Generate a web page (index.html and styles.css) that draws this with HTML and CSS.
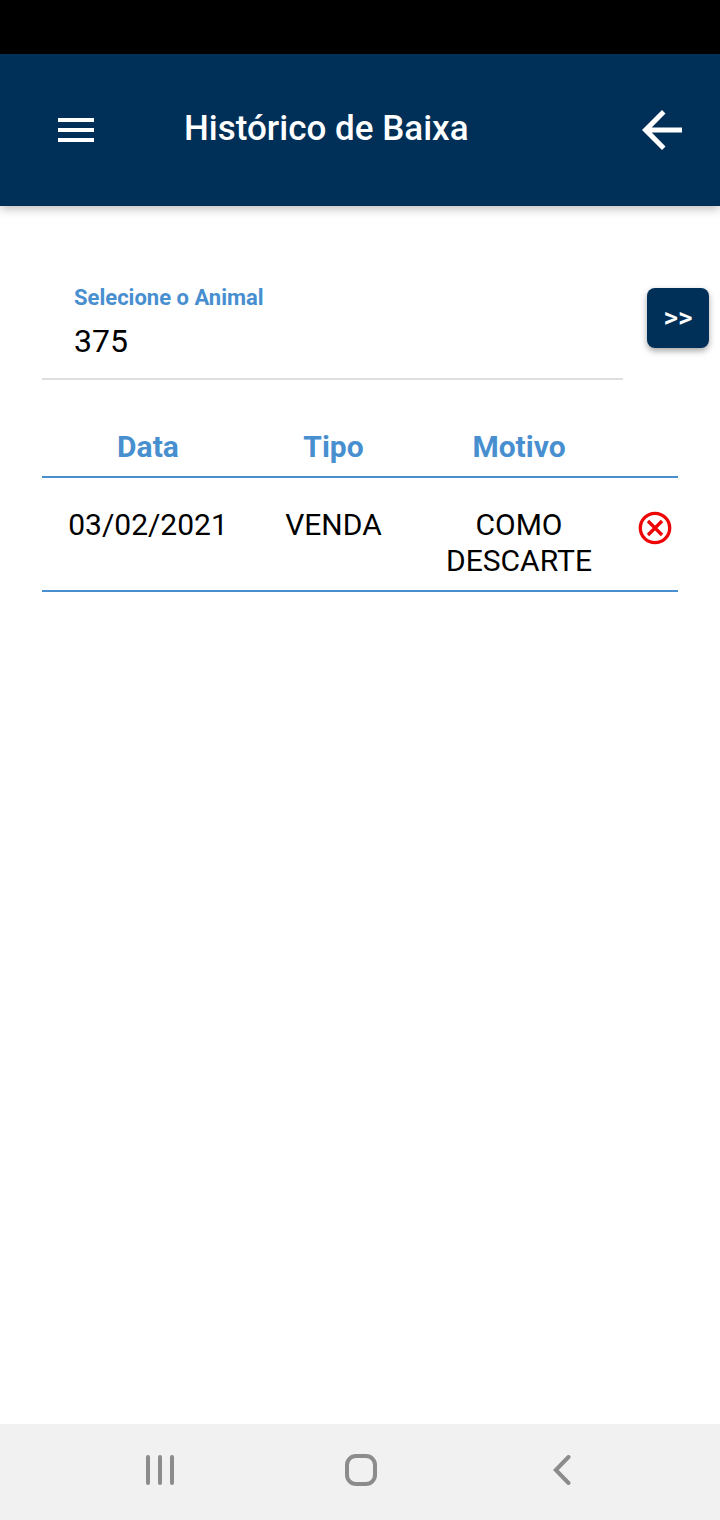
FILE: index.html
```html
<!DOCTYPE html>
<html lang="pt-BR">
<head>
<meta charset="utf-8">
<meta name="viewport" content="width=device-width, initial-scale=1">
<title>Histórico de Baixa</title>
<link rel="stylesheet" href="styles.css">
</head>
<body class="app">
<div class="status-bar"></div>
<header class="toolbar">
  <button class="icon-button" type="button" aria-label="Menu">
    <svg width="36" height="24" viewBox="0 0 36 24" fill="#fff"><path d="M0 0h36v4H0zM0 10h36v4H0zM0 20h36v4H0z"/></svg>
  </button>
  <h1 class="toolbar-title">Histórico de Baixa</h1>
  <button class="icon-button" type="button" aria-label="Voltar">
    <svg width="40" height="40" viewBox="0 0 40 40" fill="#fff"><path d="M40 17.5H9.7L23.5 3.6 20 0 0 20l20 20 3.5-3.6L9.7 22.5H40z"/></svg>
  </button>
</header>
<main class="content">
  <form class="search">
    <div class="field">
      <label class="field-label" for="animal">Selecione o Animal</label>
      <input class="field-input" id="animal" type="text" value="375">
    </div>
    <button class="go-button" type="button" aria-label="Buscar">&gt;&gt;</button>
  </form>
  <table class="history">
    <colgroup><col class="col-wide"><col class="col-medium"><col class="col-wide"><col></colgroup>
    <thead>
      <tr><th>Data</th><th>Tipo</th><th>Motivo</th><td></td></tr>
    </thead>
    <tbody>
      <tr>
        <td>03/02/2021</td>
        <td>VENDA</td>
        <td>COMO DESCARTE</td>
        <td class="action-cell">
          <button class="icon-button" type="button" aria-label="Excluir">
            <svg width="34" height="34" viewBox="0 0 34 34" fill="none" stroke="#ee0505" stroke-width="3.3"><circle cx="17" cy="17" r="14.7"/><path d="M10 10l14 14M24 10L10 24"/></svg>
          </button>
        </td>
      </tr>
    </tbody>
  </table>
</main>
<nav class="system-nav">
  <button class="icon-button" type="button" aria-label="Recentes">
    <svg width="28" height="30" viewBox="0 0 28 30" stroke="#8c8c8c" stroke-width="4" stroke-linecap="round"><path d="M2 2v26M14 2v26M26 2v26"/></svg>
  </button>
  <button class="icon-button" type="button" aria-label="Início">
    <svg width="32" height="32" viewBox="0 0 32 32" fill="none" stroke="#8c8c8c" stroke-width="4"><rect x="2" y="2" width="28" height="28" rx="9"/></svg>
  </button>
  <button class="icon-button" type="button" aria-label="Anterior">
    <svg width="18" height="30" viewBox="0 0 18 30" fill="none" stroke="#8c8c8c" stroke-width="4" stroke-linecap="round" stroke-linejoin="miter"><path d="M15.5 2L2.8 15l12.7 13"/></svg>
  </button>
</nav>
</body>
</html>
```
FILE: styles.css
```css
* {
  box-sizing: border-box;
}

.app {
  display: flex;
  flex-direction: column;
  min-height: 100vh;
  margin: 0;
  background: #fff;
  color: #000;
  font-family: Roboto, "Liberation Sans", sans-serif;
}

.status-bar {
  height: 54px;
  background: #000;
}

.toolbar {
  display: flex;
  align-items: center;
  padding: 56px 38px 56px 58px;
  background: #002f58;
  box-shadow: 0 2px 10px rgba(0, 0, 0, 0.3);
}

.toolbar-title {
  flex: 1;
  margin: 0;
  padding: 0 0 2px 90px;
  color: #fff;
  font-size: 35px;
  font-weight: 500;
  line-height: 38px;
}

.icon-button {
  display: flex;
  padding: 0;
  border: 0;
  background: none;
}

.content {
  flex: 1;
  padding: 72px 42px 0;
}

.search {
  display: flex;
  align-items: flex-start;
  gap: 24px;
  margin-right: -31px;
}

.field {
  flex: 1;
  display: flex;
  flex-direction: column;
  min-width: 0;
  padding: 8px 0 12px 32px;
  border-bottom: 2px solid #dedede;
}

.field-label {
  color: #488fd0;
  font-size: 22px;
  font-weight: 700;
  line-height: 24px;
}

.field-input {
  width: 100%;
  height: 56px;
  padding: 6px 0 0;
  border: 0;
  outline: 0;
  background: none;
  color: inherit;
  font: 32px/32px Roboto, "Liberation Sans", sans-serif;
}

.go-button {
  width: 62px;
  height: 60px;
  margin-top: 10px;
  padding: 0;
  border: 0;
  border-radius: 8px;
  background: #002f58;
  box-shadow: 0 3px 6px rgba(0, 0, 0, 0.35);
  color: #fff;
  font: 500 28px/32px Roboto, "Liberation Sans", sans-serif;
}

.history {
  width: 100%;
  margin-top: 48px;
  border-collapse: collapse;
  table-layout: fixed;
  font-size: 30px;
  line-height: 36px;
  text-align: center;
}

.col-wide {
  width: 33.3333%;
}

.col-medium {
  width: 25%;
}

.history tr {
  border-bottom: 2px solid #488fd0;
}

.history th {
  padding: 1px 0 11px;
  color: #488fd0;
  font-weight: 700;
}

.history td {
  padding: 29px 10px 11px;
  vertical-align: top;
}

.history thead td {
  padding: 0;
}

.history .action-cell {
  padding: 33px 0 0 13px;
}

.system-nav {
  display: grid;
  grid-template-columns: repeat(3, 1fr);
  place-items: center;
  height: 96px;
  padding: 0 57px 4px 59px;
  background: #f1f1f1;
}
```
